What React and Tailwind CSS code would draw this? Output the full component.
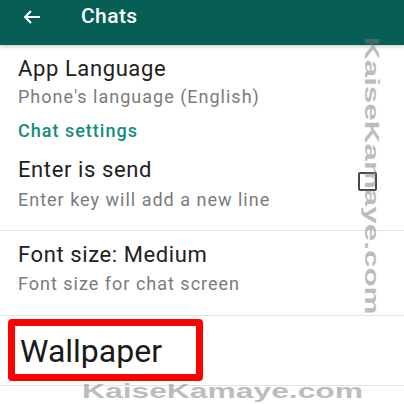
import React from 'react';

const Divider = () => <div className="h-px bg-[#e2e2e2]" />;

const Title = ({ children }) => (
  <div className="text-[22px] leading-[24px] tracking-[0.6px] text-[#212121]">{children}</div>
);

const Sub = ({ children, className = '' }) => (
  <div className={`text-[18px] leading-[20px] tracking-[1px] text-[#7b7b7b] ${className}`}>{children}</div>
);

export default function App() {
  return (
    <div className="relative w-[404px] h-[404px] overflow-hidden bg-white font-['Roboto',sans-serif]">
      {/* toolbar */}
      <div className="relative z-10 h-[45px] bg-[#075e54] flex items-start shadow-[0_2px_3px_rgba(0,0,0,0.18)]">
        <svg width="18" height="14" viewBox="0 0 18 14" className="ml-[23px] mt-[10px]" fill="none" stroke="white" strokeWidth="2">
          <path d="M17 7H2" />
          <path d="M8 1 2 7l6 6" />
        </svg>
        <div className="ml-[40px] mt-[4px] text-[21px] leading-[24px] tracking-[0.4px] font-medium text-white">Chats</div>
      </div>

      {/* settings list */}
      <div className="pl-[18px] pt-[12px]">
        <Title>App Language</Title>
        <Sub className="mt-[6px]">Phone's language (English)</Sub>
        <div className="mt-[14px] text-[18px] leading-[20px] tracking-[1px] font-medium text-[#128c7e]">Chat settings</div>
      </div>

      <div className="flex items-start justify-between pl-[18px] pr-[27px] pt-[17px] pb-[20px]">
        <div>
          <Title>Enter is send</Title>
          <Sub className="mt-[8px]">Enter key will add a new line</Sub>
        </div>
        <div className="mt-[14px] w-[19px] h-[19px] border-2 border-[#4a4a4a] rounded-[2px]" />
      </div>

      <Divider />

      <div className="pl-[18px] pt-[12px] pb-[21px]">
        <Title>Font size: Medium</Title>
        <Sub className="mt-[7px]">Font size for chat screen</Sub>
      </div>

      <Divider />

      <div className="pt-[3px] pb-[4px] pl-[8px]">
        <div className="w-[195px] h-[62px] border-[7px] border-[#ff0000] rounded-[4px] pl-[5px] pt-[6px]">
          <div className="text-[32px] leading-[38px] text-[#1a1a1a]">Wallpaper</div>
        </div>
      </div>

      <Divider />

      {/* watermarks */}
      <div className="absolute left-[82px] top-[381px] origin-left scale-x-[1.59] whitespace-nowrap font-['Liberation_Sans',sans-serif] font-bold text-[20px] leading-[20px] text-[#7a7a7a]/50">
        KaiseKamaye.com
      </div>
      <div className="absolute left-[362px] top-[37px] z-20 origin-top scale-y-[1.57] whitespace-nowrap [writing-mode:vertical-rl] font-['Liberation_Sans',sans-serif] font-bold text-[20px] leading-[20px] text-[#7a7a7a]/50">
        KaiseKamaye.com
      </div>
    </div>
  );
}
